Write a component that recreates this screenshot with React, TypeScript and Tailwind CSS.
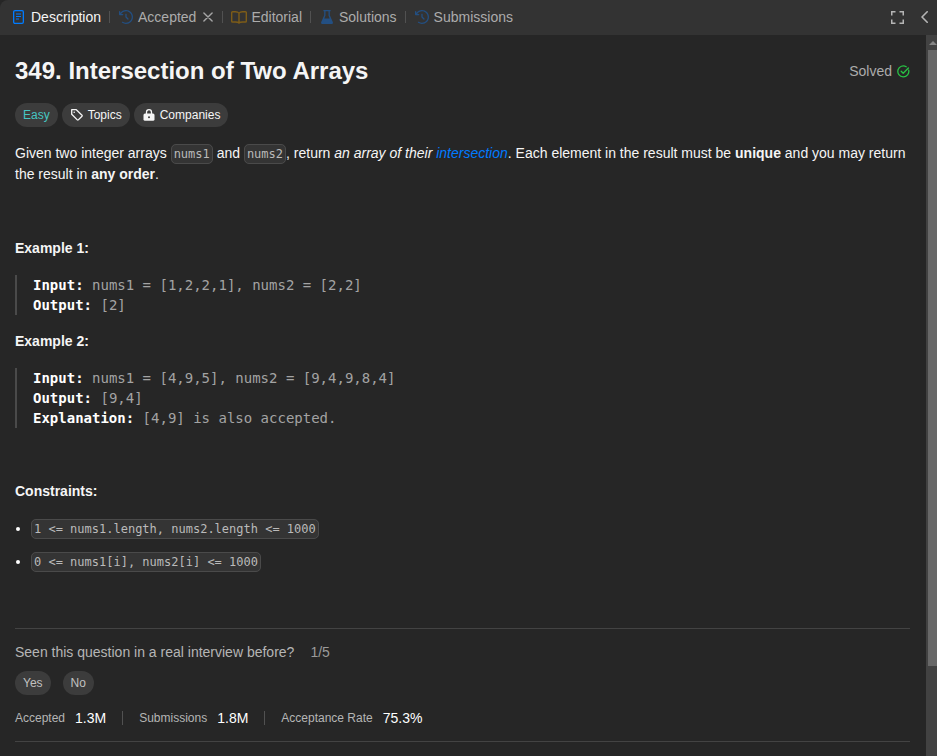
import type { ReactNode } from "react";

function HistoryIcon() {
  return (
    <svg className="size-3.5 shrink-0" viewBox="0 0 512 512" fill="#234f82">
      <path d="M48 106.7V56c0-13.3-10.7-24-24-24S0 42.7 0 56V168c0 13.3 10.7 24 24 24H136c13.3 0 24-10.7 24-24s-10.7-24-24-24H80.7c37-57.8 101.7-96 175.3-96c114.9 0 208 93.1 208 208s-93.1 208-208 208c-42.5 0-81.9-12.7-114.7-34.5c-11-7.3-25.9-4.3-33.3 6.7s-4.3 25.9 6.7 33.3C155.2 496.4 203.8 512 256 512c141.4 0 256-114.6 256-256S397.4 0 256 0C170.3 0 94.4 42.1 48 106.7zM256 128c-13.3 0-24 10.7-24 24V256c0 6.4 2.5 12.5 7 17l72 72c9.4 9.4 24.6 9.4 33.9 0s9.4-24.6 0-33.9l-65-65V152c0-13.3-10.7-24-24-24z" />
    </svg>
  );
}

function Tab({ icon, label, active, className }: { icon: ReactNode; label: string; active?: boolean; className: string }) {
  return (
    <div className={"flex items-center " + className}>
      {icon}
      <span className={active ? "text-[#f5f5f5]" : "text-[#acacac]"}>{label}</span>
    </div>
  );
}

function Divider({ className }: { className: string }) {
  return <div className={"h-3 w-px shrink-0 bg-[#515151] " + className} />;
}

function Code({ children }: { children: ReactNode }) {
  return (
    <code className="rounded-[5px] border border-[#4a4a4a] bg-[#343434] px-[2px] py-[2px] font-['DejaVu_Sans_Mono',monospace] text-xs text-[#bababa] whitespace-pre">
      {children}
    </code>
  );
}

function Example({ className, rows }: { className: string; rows: [string, string][] }) {
  return (
    <pre className={"border-l-2 border-[#4a4a4a] pl-4 font-['DejaVu_Sans_Mono',monospace] text-sm leading-5 text-[#a3a3a3] " + className}>
      {rows.map(([k, v]) => (
        <div key={k} className="h-5">
          <strong className="font-bold text-white">{k}:</strong> {v}
        </div>
      ))}
    </pre>
  );
}

function Stat({ label, value }: { label: string; value: string }) {
  return (
    <div className="flex items-center gap-[10px]">
      <span className="text-xs text-[#b5b5b5]">{label}</span>
      <span className="text-sm text-white">{value}</span>
    </div>
  );
}

export default function App() {
  return (
    <div className="flex h-[756px] w-[937px] flex-col overflow-hidden bg-[#262626] font-['Liberation_Sans',Arial,sans-serif] text-sm text-[#f5f5f5]">
      <header className="flex h-[35px] shrink-0 items-center rounded-tl-lg bg-[#333333] pb-px pl-[13px]">
        <Tab
          active
          className="gap-[7px]"
          label="Description"
          icon={
            <svg className="h-[14px] w-[11px]" viewBox="0 0 11 14" fill="none" stroke="#007bff" strokeWidth="1.3">
              <rect x=".65" y=".65" width="9.7" height="12.7" rx="1.3" />
              <path d="M3 4h5M3 6.500h5M3 9h3" strokeWidth="1.100" />
            </svg>
          }
        />
        <Divider className="ml-2" />
        <Tab className="ml-[9px] gap-[5px]" label="Accepted" icon={<HistoryIcon />} />
        <svg className="ml-[7px] h-[10px] w-[10px]" viewBox="0 0 10 10" stroke="#a5a5a5" strokeWidth="1.4" strokeLinecap="round">
          <path d="m.9.9 8.2 8.2M9.1.9.9 9.1" />
        </svg>
        <Divider className="ml-[9px]" />
        <Tab
          className="ml-2 gap-1"
          label="Editorial"
          icon={
            <svg className="h-[13px] w-4" viewBox="0 0 16 13" fill="none" stroke="#7d5c18" strokeWidth="1.4">
              <path d="M8 2.100C7.100 1.100 6 .8 4.500.8H1.500A.8.8 0 0 0 .7 1.600v8.600a.8.8 0 0 0 .8.8h3.100C6.200 11 7.300 11.300 8 12c.7-.7 1.800-1 3.400-1h3.100a.8.8 0 0 0 .8-.8V1.600a.8.8 0 0 0-.8-.8h-3C10 .8 8.900 1.100 8 2.100Zm0 0V12" />
            </svg>
          }
        />
        <Divider className="ml-2" />
        <Tab
          className="ml-[10px] gap-[6px]"
          label="Solutions"
          icon={
            <svg className="h-[14px] w-3" viewBox="0 0 12 14" fill="#234f82">
              <path fillRule="evenodd" d="M2.400 0h7.200v1.300h-.8v4L11.800 12c.4 1-.2 2-1.200 2H1.400C.4 14-.2 13 .2 12l3-6.700v-4h-.8Zm2.100 1.300v4.300L3.300 8.400h5.400L7.500 5.600V1.300Z" />
            </svg>
          }
        />
        <Divider className="ml-2" />
        <Tab className="ml-[9px] gap-[5px]" label="Submissions" icon={<HistoryIcon />} />
        <svg className="mr-[17px] ml-auto size-[13px]" viewBox="0 0 13 13" fill="none" stroke="#b5b5b5" strokeWidth="1.5">
          <path d="M4.500.75H.75V4.500M8.500.75h3.750V4.500M4.500 12.250H.75V8.500M8.500 12.250h3.750V8.500" />
        </svg>
        <svg className="mr-[9px] h-3 w-[7px]" viewBox="0 0 7 12" fill="none" stroke="#b5b5b5" strokeWidth="1.600" strokeLinecap="round" strokeLinejoin="round">
          <path d="M6.200.8 1 6l5.200 5.200" />
        </svg>
      </header>

      <div className="flex min-h-0 grow">
        <main className="grow pl-[15px] pr-4 pt-[18px]">
          <div className="flex h-9 items-center justify-between">
            <h1 className="text-2xl font-semibold">349. Intersection of Two Arrays</h1>
            <div className="flex items-center gap-[5px] text-[#acacac]">
              Solved
              <svg className="size-[13px]" viewBox="0 0 13 13" fill="none" stroke="#28c244" strokeWidth="1.300" strokeLinecap="round" strokeLinejoin="round">
                <path d="M11.700 5.200A5.500 5.500 0 1 1 9.200 1.700M4.200 6.300l2 2L11.400 3" />
              </svg>
            </div>
          </div>

          <div className="mt-[14px] flex gap-1 text-xs">
            <span className="flex h-6 items-center rounded-full bg-[#3c3c3c] px-2 text-[#46c6c2]">Easy</span>
            <span className="flex h-6 items-center gap-[5px] rounded-full bg-[#3c3c3c] px-2">
              <svg className="ml-px size-3" viewBox="0 0 12 12" fill="none" stroke="#f5f5f5" strokeWidth="1.300" strokeLinejoin="round">
                <path d="M.7.7v4.500l5.600 5.700q.5.500 1 0l3.700-3.700q.4-.5 0-1L5.300.7Z" />
                <circle cx="3.200" cy="3.200" r=".8" fill="#f5f5f5" stroke="none" />
              </svg>
              Topics
            </span>
            <span className="flex h-6 items-center gap-[5px] rounded-full bg-[#3c3c3c] px-2">
              <svg className="ml-px h-3 w-3" viewBox="0 0 12 12">
                <path d="M3.500 5V3.200a2.500 2.500 0 0 1 5 0V5" fill="none" stroke="#f5f5f5" strokeWidth="1.300" />
                <rect x=".5" y="4.600" width="11" height="7.200" rx="1.500" fill="#f5f5f5" />
                <circle cx="6" cy="8.200" r="1" fill="#3c3c3c" />
              </svg>
              Companies
            </span>
          </div>

          <p className="mt-4 leading-[21px]">
            Given two integer arrays <Code>nums1</Code> and <Code>nums2</Code>, return{" "}
            <em>
              an array of their <span className="text-[#007bff]">intersection</span>
            </em>
            . Each element in the result must be <strong>unique</strong> and you may return the result in{" "}
            <strong>any order</strong>.
          </p>

          <p className="mt-[53px] leading-[21px] font-bold">Example 1:</p>
          <Example
            className="mt-4"
            rows={[
              ["Input", "nums1 = [1,2,2,1], nums2 = [2,2]"],
              ["Output", "[2]"],
            ]}
          />
          <p className="mt-4 leading-[21px] font-bold">Example 2:</p>
          <Example
            className="mt-4"
            rows={[
              ["Input", "nums1 = [4,9,5], nums2 = [9,4,9,8,4]"],
              ["Output", "[9,4]"],
              ["Explanation", "[4,9] is also accepted."],
            ]}
          />

          <p className="mt-[53px] leading-[21px] font-bold">Constraints:</p>
          <ul className="mt-4 flex flex-col gap-3 leading-[21px]">
            {["1 <= nums1.length, nums2.length <= 1000", "0 <= nums1[i], nums2[i] <= 1000"].map((c) => (
              <li key={c} className="flex h-[21px] items-center">
                <span className="mr-[11px] ml-px size-1 rounded-full bg-white" />
                <span>
                  <Code>{c}</Code>
                </span>
              </li>
            ))}
          </ul>

          <section className="mt-14 h-[114px] border-y border-[#434343] pt-[13px]">
            <div className="flex gap-4 leading-5 text-[#b5b5b5]">
              <span>Seen this question in a real interview before?</span>
              <span className="text-[#9a9a9a]">1/5</span>
            </div>
            <div className="mt-[9px] flex gap-3 text-xs text-[#c0c0c0]">
              <span className="flex h-6 items-center rounded-full bg-[#3c3c3c] px-2">Yes</span>
              <span className="flex h-6 items-center rounded-full bg-[#3c3c3c] px-2">No</span>
            </div>
            <div className="mt-[13px] flex h-5 items-center">
              <Stat label="Accepted" value="1.3M" />
              <div className="mx-4 h-[14px] w-px bg-[#515151]" />
              <Stat label="Submissions" value="1.8M" />
              <div className="mx-4 h-[14px] w-px bg-[#515151]" />
              <Stat label="Acceptance Rate" value="75.3%" />
            </div>
          </section>
        </main>

        <aside className="flex w-[11px] shrink-0 flex-col bg-[#424242] pl-[2px]">
          <div className="flex h-[15px] items-center pl-px">
            <svg className="h-1 w-2" viewBox="0 0 8 4" fill="#868686">
              <path d="M0 4 4 0l4 4Z" />
            </svg>
          </div>
          <div className="h-[616px] bg-[#686868]" />
        </aside>
      </div>
    </div>
  );
}
